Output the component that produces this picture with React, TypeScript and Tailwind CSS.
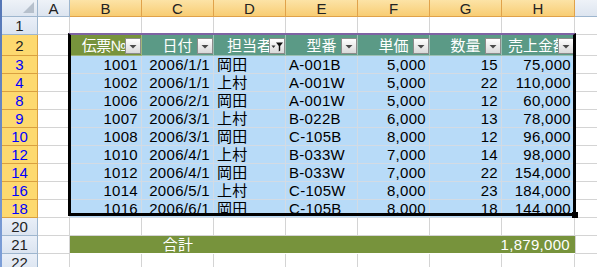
const font = "font-['Liberation_Sans','Noto_Sans_CJK_JP',sans-serif]";

const colW = ['w-[72px]', 'w-[72px]', 'w-[72px]', 'w-[72px]', 'w-[72px]', 'w-[72px]', 'w-[73px]'];
const letters = ['B', 'C', 'D', 'E', 'F', 'G', 'H'];
const heads = ['伝票№', '日付', '担当者', '型番', '単価', '数量', '売上金額'];
const align = ['text-right', 'text-right', 'text-left', 'text-left', 'text-right', 'text-right', 'text-right'];

const rows = [
  ['3', '1001', '2006/1/1', '岡田', 'A-001B', '5,000', '15', '75,000'],
  ['4', '1002', '2006/1/1', '上村', 'A-001W', '5,000', '22', '110,000'],
  ['8', '1006', '2006/2/1', '岡田', 'A-001W', '5,000', '12', '60,000'],
  ['9', '1007', '2006/3/1', '上村', 'B-022B', '6,000', '13', '78,000'],
  ['10', '1008', '2006/3/1', '岡田', 'C-105B', '8,000', '12', '96,000'],
  ['12', '1010', '2006/4/1', '上村', 'B-033W', '7,000', '14', '98,000'],
  ['14', '1012', '2006/4/1', '岡田', 'B-033W', '7,000', '22', '154,000'],
  ['16', '1014', '2006/5/1', '上村', 'C-105W', '8,000', '23', '184,000'],
  ['18', '1016', '2006/6/1', '岡田', 'C-105B', '8,000', '18', '144,000'],
];

const FilterBtn = ({ active }: { active?: boolean }) => (
  <span className="absolute right-0 bottom-[1px] w-[16px] h-[16px] border border-[#8c8c8c] bg-gradient-to-b from-white to-[#d9d9d9] flex items-center justify-center">
    <svg width="14" height="14" viewBox="0 0 14 14">
      {active ? (
        <>
          <path d="M1.5 6.5h4l-2 2.5z" fill="#333" />
          <path d="M6 3.5h7l-2.8 3.5v4.5l-1.4 1V7z" fill="#111" />
        </>
      ) : (
        <path d="M3.5 6h7l-3.5 3.5z" fill="#4a4a4a" />
      )}
    </svg>
  </span>
);

// row header cell
const RowHead = ({ n, sel, blue }: { n: string; sel?: boolean; blue?: boolean }) => (
  <div
    className={`w-[36px] shrink-0 h-full flex items-center justify-center border-r border-b text-[15px] leading-none ${
      sel
        ? 'bg-[#fdd96f] border-[#d9a040]'
        : 'bg-gradient-to-b from-[#e9eff8] to-[#dbe4f0] border-[#9eb6ce]'
    } ${blue ? 'text-[#0000ff]' : 'text-[#222]'}`}
  >
    {n}
  </div>
);

const Blank = ({ w }: { w: string }) => (
  <div className={`${w} shrink-0 h-full border-r border-b border-[#d4d4d4]`} />
);

const EmptyRow = ({ n }: { n: string }) => (
  <div className="h-[18px] shrink-0 flex">
    <RowHead n={n} />
    <Blank w="w-[32px]" />
    {colW.map((w, i) => (
      <Blank key={i} w={w} />
    ))}
    <div className="flex-1 h-full border-b border-[#d4d4d4]" />
  </div>
);

const App = () => {
  return (
    <div className={`relative w-[597px] h-[267px] overflow-hidden bg-white flex ${font}`}>
      <div className="w-[2px] shrink-0 bg-gradient-to-b from-[#5576b6] to-[#7d9fd8]" />
      <div className="flex-1 flex flex-col">
        {/* column headers */}
        <div className="h-[17px] shrink-0 flex">
          <div className="w-[36px] shrink-0 h-full border-r border-b border-[#9eb6ce] bg-gradient-to-b from-[#eef2f8] to-[#dde5f0] flex items-end justify-end p-[3px]">
            <svg width="11" height="11" viewBox="0 0 11 11">
              <path d="M11 0v11H0z" fill="#b6c0cc" />
            </svg>
          </div>
          <div className="w-[32px] shrink-0 h-full border-r border-b border-[#9eb6ce] bg-gradient-to-b from-[#eef2f8] to-[#dde5f0] flex items-center justify-center text-[15px] leading-none text-[#222]">
            A
          </div>
          {letters.map((l, i) => (
            <div
              key={l}
              className={`${colW[i]} shrink-0 h-full border-r border-b border-[#e0a24a] bg-gradient-to-b from-[#fce3a6] to-[#f8cd73] flex items-center justify-center text-[15px] leading-none text-[#222]`}
            >
              {l}
            </div>
          ))}
          <div className="flex-1 h-full border-b border-[#9eb6ce] bg-gradient-to-b from-[#eef2f8] to-[#dde5f0]" />
        </div>

        <EmptyRow n="1" />

        {/* row 2: table header */}
        <div className="h-[21px] shrink-0 flex">
          <RowHead n="2" sel />
          <Blank w="w-[32px]" />
          {heads.map((h, i) => (
            <div
              key={h}
              className={`${colW[i]} relative shrink-0 h-full border-r border-b flex items-center justify-center pt-[2px] text-[15px] leading-[18px] text-white whitespace-nowrap overflow-hidden ${
                i === 0 ? 'bg-[#77933c] border-[#a3b67b] pr-[3px] tracking-[-0.5px]' : 'bg-[#5b9a86] border-[#9cc0b4]'
              }`}
            >
              {h}
              <FilterBtn active={i === 2} />
            </div>
          ))}
          <div className="flex-1 h-full border-b border-[#d4d4d4]" />
        </div>

        {/* data rows */}
        {rows.map(r => (
          <div key={r[0]} className="h-[18px] shrink-0 flex">
            <RowHead n={r[0]} sel blue />
            <Blank w="w-[32px]" />
            {r.slice(1).map((v, i) => (
              <div
                key={i}
                className={`${colW[i]} shrink-0 h-full border-r border-b border-[#d3dbe4] bg-[#b8dbf8] px-[3px] ${align[i]} text-[15px] leading-[18px] tracking-[0.3px] text-black whitespace-nowrap`}
              >
                {v}
              </div>
            ))}
            <div className="flex-1 h-full border-b border-[#d4d4d4]" />
          </div>
        ))}

        <EmptyRow n="20" />

        {/* row 21: total */}
        <div className="h-[18px] shrink-0 flex">
          <RowHead n="21" />
          <Blank w="w-[32px]" />
          <div className="w-[505px] shrink-0 h-full flex items-center bg-[#77933c] border-b border-white text-[15px] leading-[17px] tracking-[0.3px] text-white">
            <div className="w-[216px] text-center">合計</div>
            <div className="flex-1 text-right pr-[5px]">1,879,000</div>
          </div>
          <div className="flex-1 h-full border-l border-b border-[#d4d4d4]" />
        </div>

        <EmptyRow n="22" />
      </div>

      {/* selection border + fill handle over the table */}
      <div className="absolute left-[68px] top-[33px] w-[508px] h-[183px] border-[3px] border-t-2 border-black border-t-[#7e63a3] pointer-events-none" />
      <div className="absolute left-[572px] top-[212px] w-[6px] h-[6px] bg-black" />
    </div>
  );
};

export default App;
